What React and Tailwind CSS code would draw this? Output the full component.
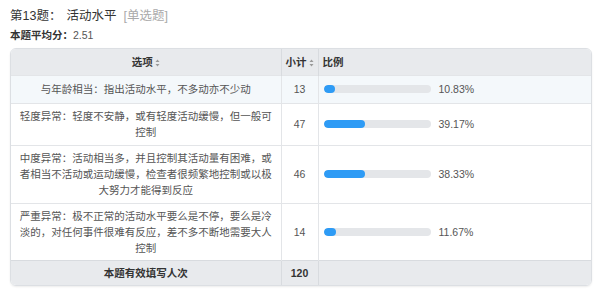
import React from "react";

const rows = [
  { text: "与年龄相当：指出活动水平，不多动亦不少动", n: 13, p: 10.83, h: "h-[28px]", bg: "bg-[#f4f8fb]" },
  { text: "轻度异常：轻度不安静，或有轻度活动缓慢，但一般可控制", n: 47, p: 39.17, h: "h-[42px]", bg: "bg-white" },
  { text: "中度异常：活动相当多，并且控制其活动量有困难，或者相当不活动或运动缓慢，检查者很频繁地控制或以极大努力才能得到反应", n: 46, p: 38.33, h: "h-[58px]", bg: "bg-white" },
  { text: "严重异常：极不正常的活动水平要么是不停，要么是冷淡的，对任何事件很难有反应，差不多不断地需要大人控制", n: 14, p: 11.67, h: "h-[57px]", bg: "bg-white" },
];

function Sort() {
  return (
    <svg width="5" height="8" viewBox="0 0 5 8" className="inline-block ml-[2px] align-[-1px]">
      <path d="M2.5 0.5 L4.5 3 L0.5 3 Z" fill="#999" />
      <path d="M2.5 7.5 L4.5 5 L0.5 5 Z" fill="#999" />
    </svg>
  );
}

export default function App() {
  return (
    <div
      className="w-[600px] h-[297px] bg-white overflow-hidden"
      style={{ fontFamily: '"Liberation Sans", "Noto Sans CJK SC", sans-serif' }}
    >
      <div className="pl-[10px] pt-[7px] h-[27px] text-[12.5px] leading-[18px] text-[#333]">
        <span>第13题：</span>
        <span className="ml-[5px]">活动水平</span>
        <span className="ml-[7px] text-[#aaa]">[单选题]</span>
      </div>
      <div className="pl-[10px] h-[16px] text-[10.5px] leading-[16px] text-[#333]">
        <span className="font-bold">本题平均分：</span>
        <span className="text-[#555]">2.51</span>
      </div>
      <div className="ml-[10px] mt-[5px] w-[582px] rounded-[6px] border border-[#dcdfe3] overflow-hidden shadow-[0_1px_2px_rgba(0,0,0,0.08)]">
        <table className="w-full border-collapse table-fixed text-[10.5px] leading-[16px]">
          <colgroup>
            <col className="w-[270px]" />
            <col className="w-[37px]" />
            <col />
          </colgroup>
          <thead>
            <tr className="h-[26px] bg-[#e8eaed] text-[#333] font-bold">
              <th className="text-center border-r border-[#d8dbdf] font-bold">选项<Sort /></th>
              <th className="text-center border-r border-[#d8dbdf] font-bold whitespace-nowrap">小计<Sort /></th>
              <th className="text-left pl-[4px] font-bold">比例</th>
            </tr>
          </thead>
          <tbody>
            {rows.map((r, i) => (
              <tr key={i} className={`${r.h} ${r.bg} border-t border-[#e3e5e8] text-[#555]`}>
                <td className="text-center px-[6px] py-[4px] border-r border-[#e3e5e8]">{r.text}</td>
                <td className="text-center border-r border-[#e3e5e8]">{r.n}</td>
                <td className="pl-[5px]">
                  <div className="flex items-center">
                    <div className="w-[107px] h-[8px] rounded-full bg-[#e4e6e9] overflow-hidden">
                      <div className="h-full rounded-full bg-[#2e9bf5]" style={{ width: `${Math.max(r.p, 11)}%` }} />
                    </div>
                    <span className="ml-[8px] text-[#555]">{r.p.toFixed(2)}%</span>
                  </div>
                </td>
              </tr>
            ))}
            <tr className="h-[25px] bg-[#e8eaed] border-t border-[#d8dbdf] text-[#333] font-bold">
              <td className="text-center border-r border-[#d8dbdf]">本题有效填写人次</td>
              <td className="text-center border-r border-[#d8dbdf]">120</td>
              <td />
            </tr>
          </tbody>
        </table>
      </div>
    </div>
  );
}
